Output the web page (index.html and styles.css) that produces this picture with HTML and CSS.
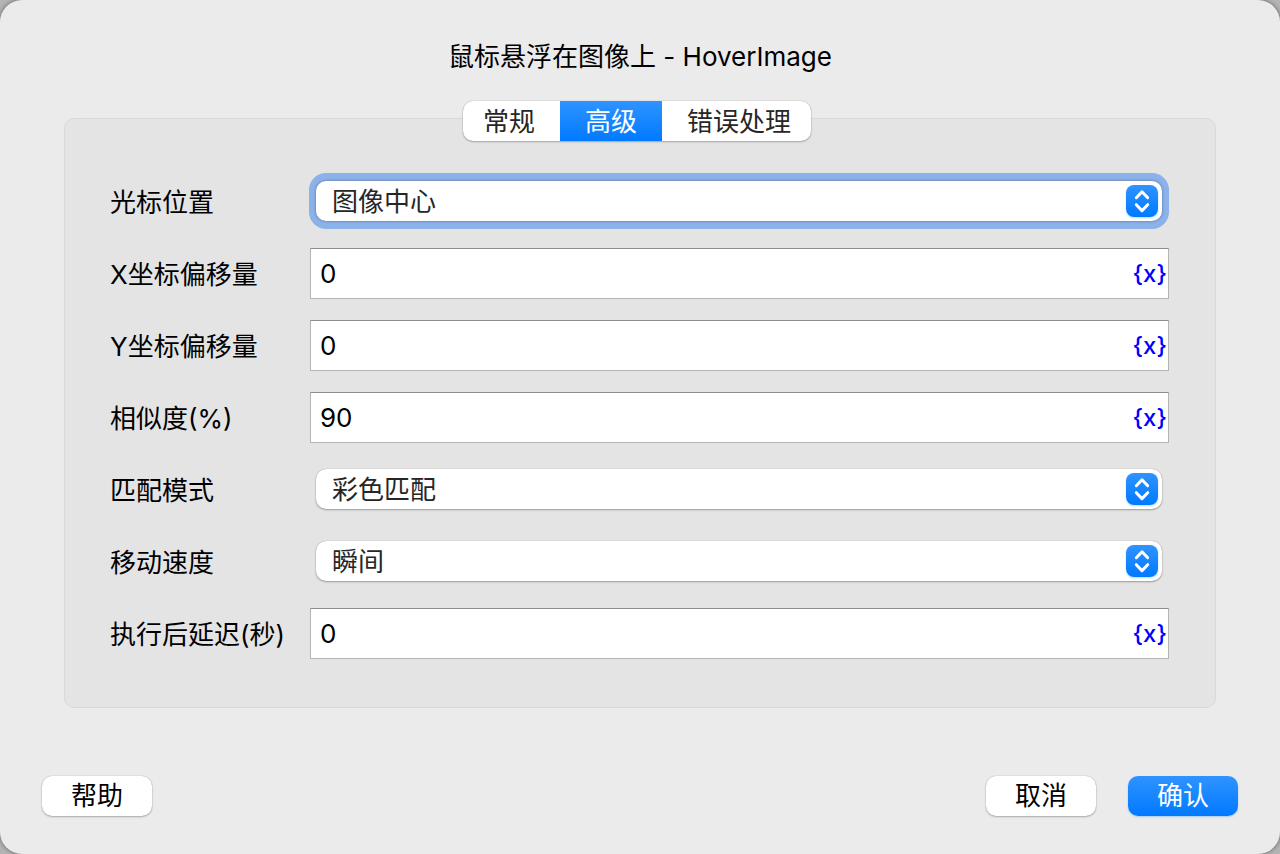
FILE: index.html
```html
<!DOCTYPE html>
<html lang="zh-CN">
<head>
<meta charset="utf-8">
<meta name="viewport" content="width=device-width, initial-scale=1">
<title>鼠标悬浮在图像上 - HoverImage</title>
<link rel="stylesheet" href="styles.css">
</head>
<body>
<main class="dialog">
  <h1 class="title">鼠标悬浮在图像上 - HoverImage</h1>

  <div class="tabs" role="tablist">
    <button class="tab" type="button" role="tab" aria-selected="false">常规</button>
    <button class="tab tab-active" type="button" role="tab" aria-selected="true">高级</button>
    <button class="tab" type="button" role="tab" aria-selected="false">错误处理</button>
  </div>

  <form class="panel" id="settings">
    <div class="row">
      <label class="label" for="cursor">光标位置</label>
      <div class="picker picker-focus">
        <select class="select" id="cursor"><option>图像中心</option></select>
        <svg class="arrows" viewBox="0 0 32 32" aria-hidden="true"><path d="M10.300 12.700L16 6.800l5.700 5.900M10.300 19.700L16 25.600l5.700-5.900"/></svg>
      </div>
    </div>
    <div class="row">
      <label class="label" for="offset-x">X坐标偏移量</label>
      <div class="field">
        <input class="input" id="offset-x" type="text" value="0">
        <button class="variable" type="button">{x}</button>
      </div>
    </div>
    <div class="row">
      <label class="label" for="offset-y">Y坐标偏移量</label>
      <div class="field">
        <input class="input" id="offset-y" type="text" value="0">
        <button class="variable" type="button">{x}</button>
      </div>
    </div>
    <div class="row">
      <label class="label" for="similarity">相似度(%)</label>
      <div class="field">
        <input class="input" id="similarity" type="text" value="90">
        <button class="variable" type="button">{x}</button>
      </div>
    </div>
    <div class="row">
      <label class="label" for="match">匹配模式</label>
      <div class="picker">
        <select class="select" id="match"><option>彩色匹配</option></select>
        <svg class="arrows" viewBox="0 0 32 32" aria-hidden="true"><path d="M10.300 12.700L16 6.800l5.700 5.900M10.300 19.700L16 25.600l5.700-5.900"/></svg>
      </div>
    </div>
    <div class="row">
      <label class="label" for="speed">移动速度</label>
      <div class="picker">
        <select class="select" id="speed"><option>瞬间</option></select>
        <svg class="arrows" viewBox="0 0 32 32" aria-hidden="true"><path d="M10.300 12.700L16 6.800l5.700 5.900M10.300 19.700L16 25.600l5.700-5.900"/></svg>
      </div>
    </div>
    <div class="row">
      <label class="label" for="delay">执行后延迟(秒)</label>
      <div class="field">
        <input class="input" id="delay" type="text" value="0">
        <button class="variable" type="button">{x}</button>
      </div>
    </div>
  </form>

  <footer class="actions">
    <button class="button button-help" type="button">帮助</button>
    <button class="button" type="button">取消</button>
    <button class="button button-primary" type="submit" form="settings">确认</button>
  </footer>
</main>
</body>
</html>
```

FILE: styles.css
```css
* {
  box-sizing: border-box;
}

body {
  margin: 0;
  background: #b4b4b4;
  color: #000;
}

body,
button,
input,
select {
  font-family: Inter, "Noto Sans CJK SC", sans-serif;
  font-size: 26px;
  line-height: 36px;
}

.dialog {
  display: flex;
  flex-direction: column;
  min-height: 100vh;
  padding: 39px 42px 38px;
  background: #ebebeb;
  border-radius: 22px;
  box-shadow: 0 0 4px rgba(0, 0, 0, 0.5);
}

.title {
  margin: 0 0 26px;
  font-size: 26px;
  font-weight: 400;
  text-align: center;
}

/* The segmented control straddles the panel's top edge. */
.tabs {
  display: flex;
  z-index: 1;
  align-self: center;
  margin: 0 6px -23px 0;
  overflow: hidden;
  background: #fff;
  border-radius: 10px;
  box-shadow: 0 0 1px rgba(0, 0, 0, 0.35), 0 1px 2px rgba(0, 0, 0, 0.25);
}

.tab {
  height: 40px;
  padding: 2px 25px 0;
  border: 0;
  background: transparent;
  color: #262626;
}

.tab:first-child {
  padding-left: 20px;
}

.tab:last-child {
  padding-right: 20px;
}

.tab-active {
  background: linear-gradient(#2f93ff, #007aff);
  color: #fff;
}

.panel {
  display: flex;
  flex-direction: column;
  gap: 21px;
  margin: 0 22px;
  padding: 57px 46px 48px 45px;
  background: #e4e4e4;
  border: 1px solid #d9d9d9;
  border-radius: 10px;
}

.row {
  display: grid;
  grid-template-columns: 200px minmax(0, 1fr);
  align-items: center;
  height: 51px;
}

.label {
  padding-top: 2px;
  white-space: nowrap;
}

.field,
.picker {
  display: flex;
  position: relative;
  align-items: center;
}

.input {
  width: 100%;
  height: 51px;
  padding: 0 48px 0 9px;
  border: 1px solid #b4b4b4;
  border-top-color: #8c8c8c;
  border-radius: 0;
  outline: 0;
  background: #fff;
  color: #000;
}

.variable {
  position: absolute;
  right: 2px;
  padding: 0;
  border: 0;
  background: transparent;
  color: #00f;
  font-size: 24px;
  font-weight: 500;
}

.picker {
  height: 40px;
  margin: 0 7px 2px 6px;
  background: #fff;
  border-radius: 10px;
  box-shadow: 0 0 1px rgba(0, 0, 0, 0.35), 0 1px 2px rgba(0, 0, 0, 0.3);
}

.picker-focus {
  box-shadow: 0 0 3px rgba(0, 0, 0, 0.4), 0 1px 0 7px #8cb2ea, 0 -1px 0 7px #8cb2ea;
}

.select {
  width: 100%;
  height: 40px;
  padding: 2px 48px 0 16px;
  border: 0;
  outline: 0;
  appearance: none;
  background: transparent;
  color: #262626;
}

.arrows {
  position: absolute;
  right: 4px;
  width: 32px;
  height: 32px;
  border-radius: 8px;
  background: linear-gradient(#2f93ff, #007aff);
  box-shadow: 0 1px 2px rgba(0, 122, 255, 0.3);
  fill: none;
  stroke: #fff;
  stroke-width: 3;
  stroke-linecap: round;
  stroke-linejoin: round;
  pointer-events: none;
}

.actions {
  display: flex;
  gap: 32px;
  margin-top: auto;
}

.button {
  width: 110px;
  height: 40px;
  padding: 0;
  border: 0;
  border-radius: 10px;
  background: #fff;
  color: #000;
  box-shadow: 0 0 1px rgba(0, 0, 0, 0.35), 0 1px 2px rgba(0, 0, 0, 0.25);
}

.button-help {
  margin-right: auto;
}

.button-primary {
  background: linear-gradient(#2f93ff, #007aff);
  color: #fff;
  box-shadow: 0 1px 2px rgba(0, 122, 255, 0.3);
}
```
